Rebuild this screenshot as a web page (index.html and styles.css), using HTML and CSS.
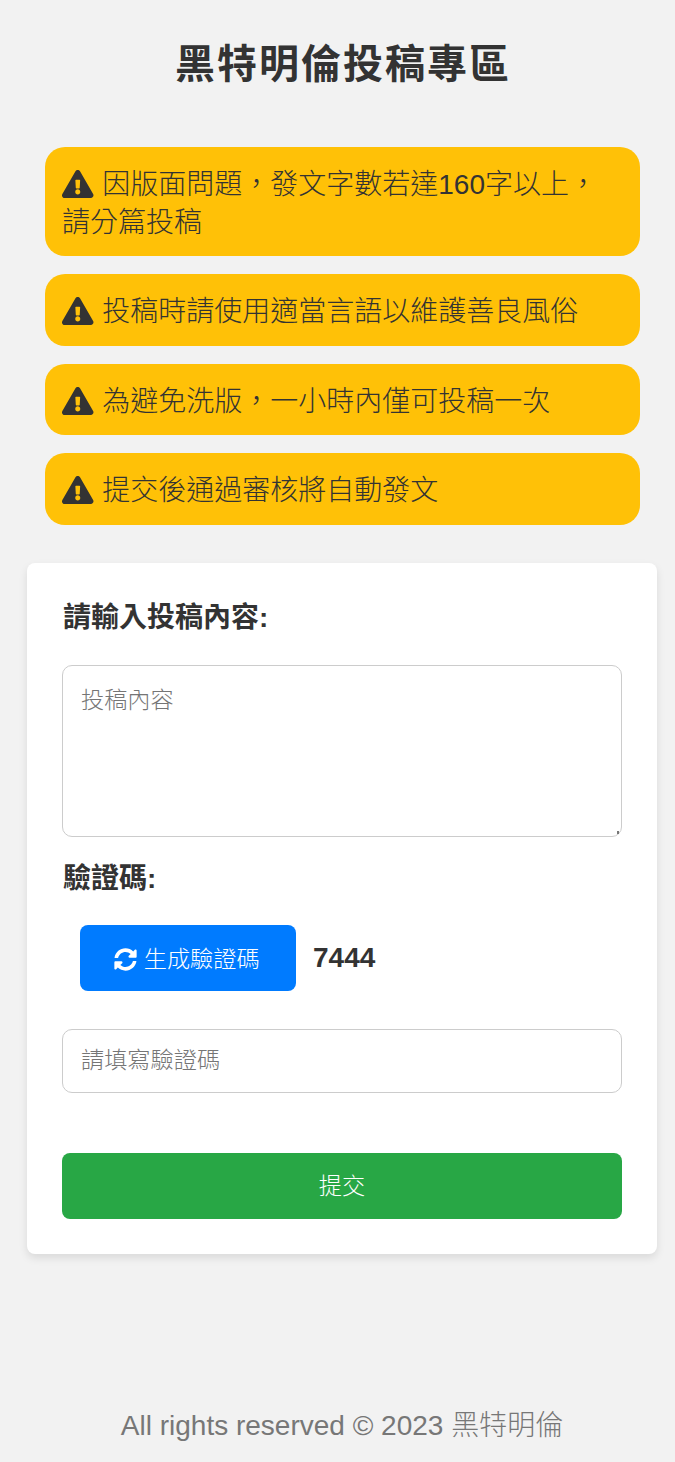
FILE: index.html
```html
<!DOCTYPE html>
<html lang="zh-TW">
<head>
    <meta charset="UTF-8">
    <meta name="viewport" content="width=device-width, initial-scale=1.0">
    <title>黑特明倫投稿專區</title>
    <link rel="stylesheet" href="styles.css">
</head>
<body>
    <h1>黑特明倫投稿專區</h1>

    <div class="notices">
        <div class="notice">
            <svg class="icon-warn" viewBox="0 0 576 512"><path d="M569.517 440.013C587.975 472.007 564.806 512 527.94 512H48.054c-36.937 0-59.999-40.055-41.577-71.987L246.423 23.985c18.467-32.009 64.72-31.951 83.154 0l239.94 416.028zM288 354c-25.405 0-46 20.595-46 46s20.595 46 46 46 46-20.595 46-46-20.595-46-46-46zm-43.673-165.346l7.418 136c.347 6.364 5.609 11.346 11.982 11.346h48.546c6.373 0 11.635-4.982 11.982-11.346l7.418-136c.375-6.874-5.098-12.654-11.982-12.654h-63.383c-6.884 0-12.356 5.78-11.981 12.654z"/></svg>
            因版面問題，發文字數若達160字以上，請分篇投稿
        </div>
        <div class="notice">
            <svg class="icon-warn" viewBox="0 0 576 512"><path d="M569.517 440.013C587.975 472.007 564.806 512 527.94 512H48.054c-36.937 0-59.999-40.055-41.577-71.987L246.423 23.985c18.467-32.009 64.72-31.951 83.154 0l239.94 416.028zM288 354c-25.405 0-46 20.595-46 46s20.595 46 46 46 46-20.595 46-46-20.595-46-46-46zm-43.673-165.346l7.418 136c.347 6.364 5.609 11.346 11.982 11.346h48.546c6.373 0 11.635-4.982 11.982-11.346l7.418-136c.375-6.874-5.098-12.654-11.982-12.654h-63.383c-6.884 0-12.356 5.78-11.981 12.654z"/></svg>
            投稿時請使用適當言語以維護善良風俗
        </div>
        <div class="notice">
            <svg class="icon-warn" viewBox="0 0 576 512"><path d="M569.517 440.013C587.975 472.007 564.806 512 527.94 512H48.054c-36.937 0-59.999-40.055-41.577-71.987L246.423 23.985c18.467-32.009 64.72-31.951 83.154 0l239.94 416.028zM288 354c-25.405 0-46 20.595-46 46s20.595 46 46 46 46-20.595 46-46-20.595-46-46-46zm-43.673-165.346l7.418 136c.347 6.364 5.609 11.346 11.982 11.346h48.546c6.373 0 11.635-4.982 11.982-11.346l7.418-136c.375-6.874-5.098-12.654-11.982-12.654h-63.383c-6.884 0-12.356 5.78-11.981 12.654z"/></svg>
            為避免洗版，一小時內僅可投稿一次
        </div>
        <div class="notice">
            <svg class="icon-warn" viewBox="0 0 576 512"><path d="M569.517 440.013C587.975 472.007 564.806 512 527.94 512H48.054c-36.937 0-59.999-40.055-41.577-71.987L246.423 23.985c18.467-32.009 64.72-31.951 83.154 0l239.94 416.028zM288 354c-25.405 0-46 20.595-46 46s20.595 46 46 46 46-20.595 46-46-20.595-46-46-46zm-43.673-165.346l7.418 136c.347 6.364 5.609 11.346 11.982 11.346h48.546c6.373 0 11.635-4.982 11.982-11.346l7.418-136c.375-6.874-5.098-12.654-11.982-12.654h-63.383c-6.884 0-12.356 5.78-11.981 12.654z"/></svg>
            提交後通過審核將自動發文
        </div>
    </div>

    <form class="card" onsubmit="return false">
        <label class="field-label" for="content">請輸入投稿內容:</label>
        <textarea class="field-area" id="content" placeholder="投稿內容"></textarea>

        <label class="field-label captcha-label" for="captcha">驗證碼:</label>
        <div class="captcha-row">
            <button type="button" class="captcha-btn">
                <svg class="icon-sync" viewBox="0 0 512 512"><path d="M370.72 133.28C339.458 104.008 298.888 87.962 255.848 88c-77.458.068-144.328 53.178-162.791 126.85-1.344 5.363-6.122 9.15-11.651 9.15H24.103c-7.498 0-13.194-6.807-11.807-14.176C33.933 94.924 134.813 8 256 8c66.448 0 126.791 26.136 171.315 68.685L463.03 40.97C478.149 25.851 504 36.559 504 57.941V192c0 13.255-10.745 24-24 24H345.941c-21.382 0-32.09-25.851-16.971-40.971l41.75-41.749zM32 296h134.059c21.382 0 32.09 25.851 16.971 40.971l-41.75 41.75c31.262 29.273 71.835 45.319 114.876 45.28 77.418-.07 144.315-53.144 162.787-126.849 1.344-5.363 6.122-9.15 11.651-9.15h57.304c7.498 0 13.194 6.807 11.807 14.176C478.067 417.076 377.187 504 256 504c-66.448 0-126.791-26.136-171.315-68.685L48.97 471.03C33.851 486.149 8 475.441 8 454.059V320c0-13.255 10.745-24 24-24z"/></svg>
                生成驗證碼
            </button>
            <span class="captcha-code">7444</span>
        </div>

        <input class="field-input" id="captcha" type="text" placeholder="請填寫驗證碼">
        <button type="submit" class="submit-btn">提交</button>
    </form>

    <footer>All rights reserved © 2023 黑特明倫</footer>
</body>
</html>
```

FILE: styles.css
```css
* {
    box-sizing: border-box;
}

body {
    margin: 0;
    padding: 0 18px 0 27px;
    background-color: #f2f2f2;
    color: #333;
    font-family: "Liberation Sans", "Noto Sans CJK TC", sans-serif;
}

h1 {
    margin: 0;
    padding: 38px 0 0 2px;
    height: 147px;
    font-size: 40px;
    line-height: 52px;
    letter-spacing: 2px;
    text-align: center;
}

.notices {
    padding: 0 17px 0 18px;
}

.notice {
    margin-bottom: 18px;
    padding: 19px 17px 15px;
    border-radius: 20px;
    background-color: #ffc107;
    font-size: 28px;
    font-weight: 300;
    line-height: 37.5px;
}

.icon-warn {
    width: 31.5px;
    height: 28px;
    margin-right: 1px;
    fill: #333;
    vertical-align: -4px;
}

.card {
    margin-top: 38px;
    padding: 35px;
    border-radius: 8px;
    background-color: #fff;
    box-shadow: 0 4px 8px rgba(0, 0, 0, 0.1);
}

.field-label {
    display: block;
    margin-left: 1px;
    font-size: 28px;
    line-height: 40px;
    font-weight: bold;
}

.field-area,
.field-input {
    display: block;
    width: 100%;
    padding: 15px 18px;
    border: 1px solid #ccc;
    border-radius: 10px;
    background-color: #fff;
    font-family: inherit;
    font-size: 23.2px;
    font-weight: 300;
    color: #333;
}

.field-area {
    height: 172px;
    margin-top: 27px;
}

.field-area::-webkit-resizer {
    background: linear-gradient(#777, #777) no-repeat right 2px bottom 2px / 2px 3px;
}

.field-input {
    height: 64px;
    margin-top: 38px;
}

::placeholder {
    color: #757575;
}

.captcha-label {
    margin-top: 22px;
    margin-bottom: -1px;
}

.captcha-row {
    display: flex;
    align-items: center;
    gap: 17px;
    margin: 27px 0 0 18px;
}

.captcha-btn {
    width: 216px;
    height: 66px;
    padding: 0 2px 2px 0;
    border: none;
    border-radius: 8px;
    background-color: #007bff;
    color: #fff;
    font-family: inherit;
    font-size: 23.2px;
    font-weight: 300;
}

.icon-sync {
    width: 23px;
    height: 23px;
    fill: #fff;
    vertical-align: -4px;
}

.captcha-code {
    font-size: 28px;
    font-weight: bold;
}

.submit-btn {
    display: block;
    width: 100%;
    height: 66px;
    margin-top: 60px;
    padding-bottom: 5px;
    border: none;
    border-radius: 8px;
    background-color: #28a745;
    color: #fff;
    font-family: inherit;
    font-size: 23.2px;
    font-weight: 300;
}

footer {
    margin-top: 152px;
    font-size: 28px;
    font-weight: 300;
    line-height: 40px;
    color: #777;
    text-align: center;
}
```
